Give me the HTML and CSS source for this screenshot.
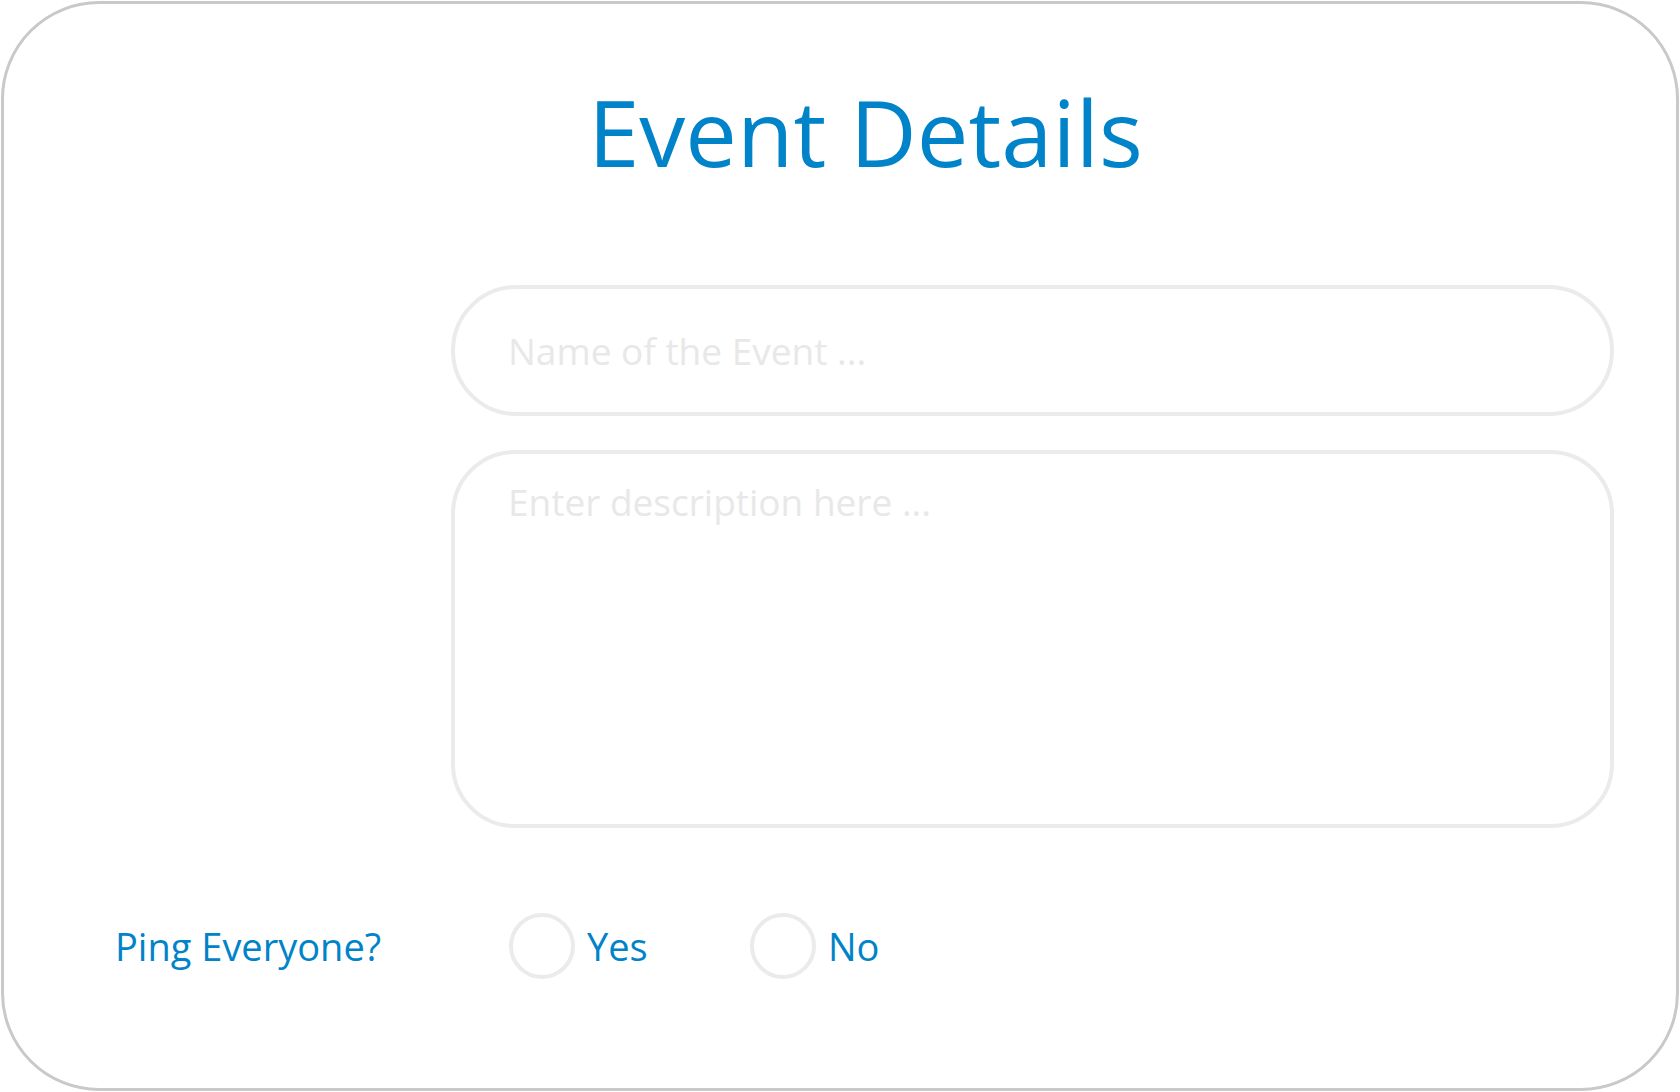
FILE: index.html
```html
<!DOCTYPE html>
<html lang="en">
<head>
<meta charset="utf-8">
<title>Event Details</title>
<link rel="stylesheet" href="styles.css">
</head>
<body>
<form class="card">
  <h1 class="title">Event Details</h1>
  <div class="fields">
    <input class="field field-name" type="text" placeholder="Name of the Event ...">
    <textarea class="field field-desc" placeholder="Enter description here ..."></textarea>
  </div>
  <div class="ping-row">
    <span class="ping-label">Ping Everyone?</span>
    <div class="options">
      <label class="option"><input class="radio" type="radio" name="ping" value="yes"><span class="option-text">Yes</span></label>
      <label class="option"><input class="radio" type="radio" name="ping" value="no"><span class="option-text">No</span></label>
    </div>
  </div>
</form>
</body>
</html>
```

FILE: styles.css
```css
html, body {
  margin: 0;
  padding: 0;
  background: #ffffff;
}

body {
  font-family: "Open Sans", "Noto Sans", "Liberation Sans", sans-serif;
  color: #0083c9;
}

.card {
  box-sizing: border-box;
  margin: 1px;
  width: 1678px;
  height: 1090px;
  border: 3px solid #c9c9c9;
  border-radius: 98px;
  padding: 81px 62px 0 111px;
  display: flex;
  flex-direction: column;
}

.title {
  margin: 0 0 0 2px;
  font-size: 92px;
  line-height: 93px;
  font-weight: 400;
  text-align: center;
  color: #0083c9;
}

.fields {
  margin: 107px 0 0 336px;
  display: flex;
  flex-direction: column;
  gap: 34px;
}

.field {
  box-sizing: border-box;
  display: block;
  width: 100%;
  border: 4px solid #ebebeb;
  background: #ffffff;
  font-family: "Open Sans", "Noto Sans", "Liberation Sans", sans-serif;
  font-size: 37px;
  color: #555555;
  outline: none;
  margin: 0;
}

.field::placeholder {
  color: #e8e8e8;
  opacity: 1;
}

.field-name {
  height: 131px;
  border-radius: 66px;
  padding: 0 53px;
}

.field-desc {
  height: 378px;
  border-radius: 64px;
  padding: 22px 53px;
  resize: none;
  line-height: normal;
}

.ping-row {
  margin-top: 85px;
  display: flex;
  align-items: center;
  height: 66px;
}

.ping-label {
  width: 394px;
  flex: none;
  font-size: 38px;
  color: #0083c9;
}

.options {
  display: flex;
  align-items: center;
}

.option {
  width: 241px;
  display: flex;
  align-items: center;
  gap: 12px;
  cursor: pointer;
}

.radio {
  appearance: none;
  -webkit-appearance: none;
  box-sizing: border-box;
  margin: 0;
  width: 66px;
  height: 66px;
  border: 4px solid #ebebeb;
  border-radius: 50%;
  background: #ffffff;
  flex: none;
}

.option-text {
  font-size: 38px;
  color: #0083c9;
}
```
